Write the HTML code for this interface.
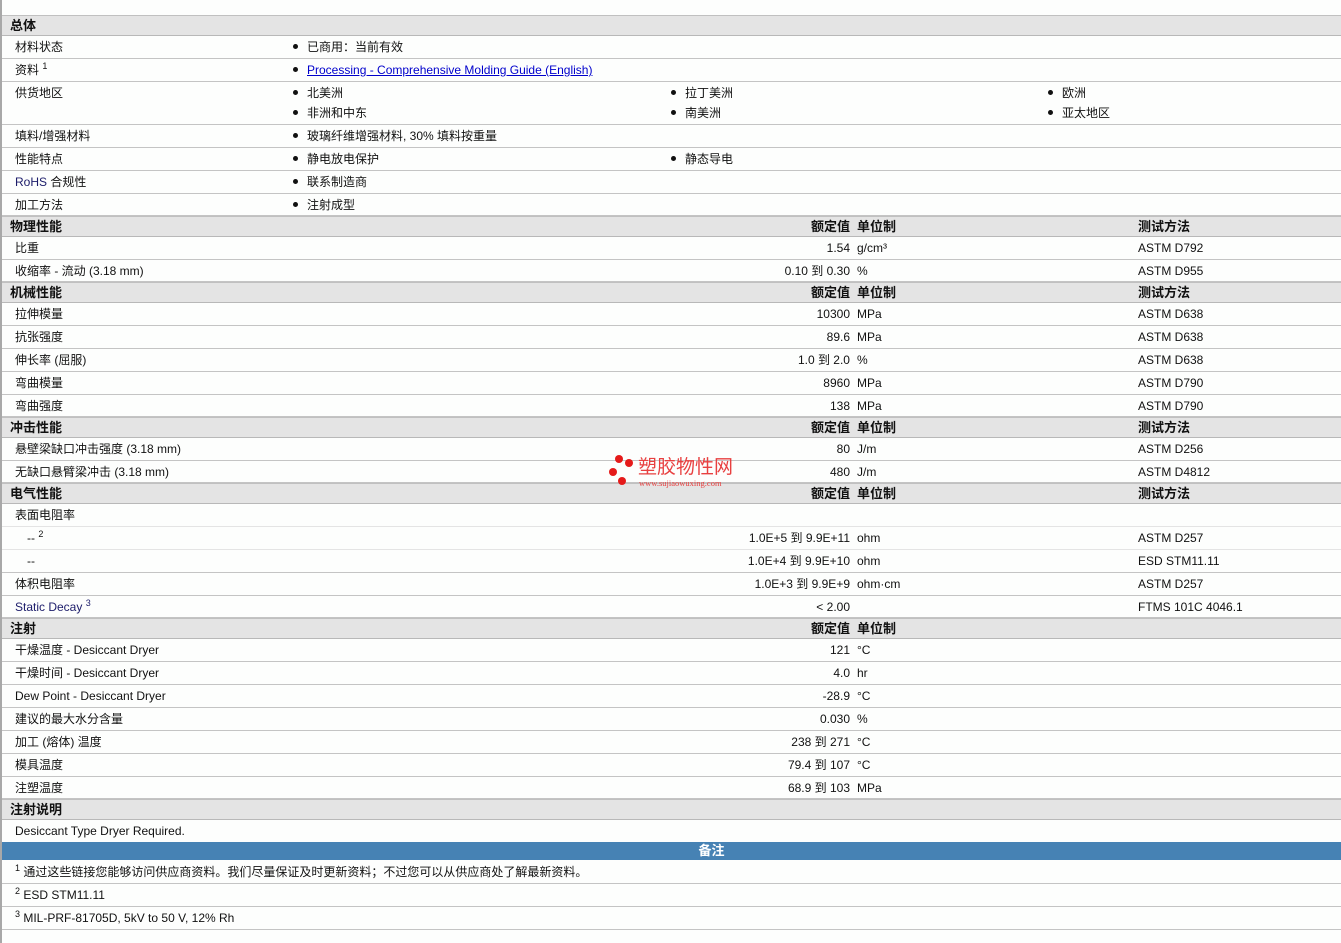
<!DOCTYPE html>
<html><head><meta charset="utf-8"><style>
body{margin:0;width:1341px;height:943px;background:#fdfefd;position:relative;overflow:hidden;font-family:"Liberation Sans","Noto Sans CJK SC",sans-serif;font-size:12px;color:#111;}
.lb{position:absolute;left:0;top:0;width:2px;height:943px;background:#a8a8a8;}
.r{position:absolute;left:2px;right:0;border-bottom:1px solid #c4c4c4;}
.r.t{border-bottom-color:#e4e4e4}
.h{position:absolute;left:2px;right:0;height:19px;background:#e4e4e4;border-top:1px solid #c0c0c0;border-bottom:1px solid #b8b8b8;font-weight:bold;font-size:13px;}
.h span{position:absolute;top:2px;line-height:15px;height:15px;white-space:nowrap}
.r span{position:absolute;top:4px;white-space:nowrap;line-height:14px;height:14px}
.r span span{position:static}
.l{left:13px}
.v{right:491px;text-align:right}
.u{left:855px}
.m{left:1136px}
.b1{left:291px}.b2{left:669px}.b3{left:1046px}
.bl::before{content:"";display:inline-block;width:5px;height:5px;border-radius:50%;background:#111;margin-right:9px;vertical-align:2px}
.en{color:#1c1c6a}
sup{font-size:9px;vertical-align:5px;line-height:0}
a{color:#00c;text-decoration:underline}
.blue{position:absolute;left:2px;right:0;top:842px;height:18px;background:#4682b4;color:#fff;font-weight:bold;font-size:13px;text-align:center;line-height:17px;padding-left:80px;box-sizing:border-box}
</style></head><body>
<div class="lb"></div>
<div class="h" style="top:15px"><span class="l" style="left:8px">总体</span></div>
<div class="r" style="top:36px;height:22px"><span class="l">材料状态</span><span class="b1 bl">已商用：当前有效</span></div>
<div class="r" style="top:59px;height:22px"><span class="l">资料 <sup>1</sup></span><span class="b1 bl"><a>Processing - Comprehensive Molding Guide (English)</a></span></div>
<div class="r" style="top:82px;height:42px"><span class="l">供货地区</span><span class="b1 bl">北美洲</span><span class="b2 bl">拉丁美洲</span><span class="b3 bl">欧洲</span><span class="b1 bl" style="top:24px">非洲和中东</span><span class="b2 bl" style="top:24px">南美洲</span><span class="b3 bl" style="top:24px">亚太地区</span></div>
<div class="r" style="top:125px;height:22px"><span class="l">填料/增强材料</span><span class="b1 bl">玻璃纤维增强材料, 30% 填料按重量</span></div>
<div class="r" style="top:148px;height:22px"><span class="l">性能特点</span><span class="b1 bl">静电放电保护</span><span class="b2 bl">静态导电</span></div>
<div class="r" style="top:171px;height:22px"><span class="l"><span class="en">RoHS</span> 合规性</span><span class="b1 bl">联系制造商</span></div>
<div class="r" style="top:194px;height:21px"><span class="l">加工方法</span><span class="b1 bl">注射成型</span></div>

<div class="h" style="top:216px"><span style="left:8px">物理性能</span><span class="v">额定值</span><span class="u">单位制</span><span class="m">测试方法</span></div>
<div class="r" style="top:237px;height:22px"><span class="l">比重</span><span class="v">1.54</span><span class="u">g/cm³</span><span class="m">ASTM D792</span></div>
<div class="r" style="top:260px;height:21px"><span class="l">收缩率 - 流动 (3.18 mm)</span><span class="v">0.10 到 0.30</span><span class="u">%</span><span class="m">ASTM D955</span></div>

<div class="h" style="top:282px"><span style="left:8px">机械性能</span><span class="v">额定值</span><span class="u">单位制</span><span class="m">测试方法</span></div>
<div class="r" style="top:303px;height:22px"><span class="l">拉伸模量</span><span class="v">10300</span><span class="u">MPa</span><span class="m">ASTM D638</span></div>
<div class="r" style="top:326px;height:22px"><span class="l">抗张强度</span><span class="v">89.6</span><span class="u">MPa</span><span class="m">ASTM D638</span></div>
<div class="r" style="top:349px;height:22px"><span class="l">伸长率 (屈服)</span><span class="v">1.0 到 2.0</span><span class="u">%</span><span class="m">ASTM D638</span></div>
<div class="r" style="top:372px;height:22px"><span class="l">弯曲模量</span><span class="v">8960</span><span class="u">MPa</span><span class="m">ASTM D790</span></div>
<div class="r" style="top:395px;height:21px"><span class="l">弯曲强度</span><span class="v">138</span><span class="u">MPa</span><span class="m">ASTM D790</span></div>

<div class="h" style="top:417px"><span style="left:8px">冲击性能</span><span class="v">额定值</span><span class="u">单位制</span><span class="m">测试方法</span></div>
<div class="r" style="top:438px;height:22px"><span class="l">悬壁梁缺口冲击强度 (3.18 mm)</span><span class="v">80</span><span class="u">J/m</span><span class="m">ASTM D256</span></div>
<div class="r" style="top:461px;height:21px"><span class="l">无缺口悬臂梁冲击 (3.18 mm)</span><span class="v">480</span><span class="u">J/m</span><span class="m">ASTM D4812</span></div>

<div class="h" style="top:483px"><span style="left:8px">电气性能</span><span class="v">额定值</span><span class="u">单位制</span><span class="m">测试方法</span></div>
<div class="r t" style="top:504px;height:22px"><span class="l">表面电阻率</span></div>
<div class="r t" style="top:527px;height:22px"><span class="l" style="left:25px">-- <sup>2</sup></span><span class="v">1.0E+5 到 9.9E+11</span><span class="u">ohm</span><span class="m">ASTM D257</span></div>
<div class="r" style="top:550px;height:22px"><span class="l" style="left:25px">--</span><span class="v">1.0E+4 到 9.9E+10</span><span class="u">ohm</span><span class="m">ESD STM11.11</span></div>
<div class="r" style="top:573px;height:22px"><span class="l">体积电阻率</span><span class="v">1.0E+3 到 9.9E+9</span><span class="u">ohm·cm</span><span class="m">ASTM D257</span></div>
<div class="r" style="top:596px;height:21px"><span class="l en">Static Decay <sup>3</sup></span><span class="v">&lt; 2.00</span><span class="m">FTMS 101C 4046.1</span></div>

<div class="h" style="top:618px"><span style="left:8px">注射</span><span class="v">额定值</span><span class="u">单位制</span></div>
<div class="r" style="top:639px;height:22px"><span class="l">干燥温度 - Desiccant Dryer</span><span class="v">121</span><span class="u">°C</span></div>
<div class="r" style="top:662px;height:22px"><span class="l">干燥时间 - Desiccant Dryer</span><span class="v">4.0</span><span class="u">hr</span></div>
<div class="r" style="top:685px;height:22px"><span class="l">Dew Point - Desiccant Dryer</span><span class="v">-28.9</span><span class="u">°C</span></div>
<div class="r" style="top:708px;height:22px"><span class="l">建议的最大水分含量</span><span class="v">0.030</span><span class="u">%</span></div>
<div class="r" style="top:731px;height:22px"><span class="l">加工 (熔体) 温度</span><span class="v">238 到 271</span><span class="u">°C</span></div>
<div class="r" style="top:754px;height:22px"><span class="l">模具温度</span><span class="v">79.4 到 107</span><span class="u">°C</span></div>
<div class="r" style="top:777px;height:21px"><span class="l">注塑温度</span><span class="v">68.9 到 103</span><span class="u">MPa</span></div>

<div class="h" style="top:799px"><span style="left:8px">注射说明</span></div>
<div class="r" style="top:820px;height:22px;border:none"><span class="l">Desiccant Type Dryer Required.</span></div>
<div class="blue">备注</div>
<div class="r" style="top:861px;height:22px"><span class="l"><sup>1</sup> 通过这些链接您能够访问供应商资料。我们尽量保证及时更新资料；不过您可以从供应商处了解最新资料。</span></div>
<div class="r" style="top:884px;height:22px"><span class="l"><sup>2</sup> ESD STM11.11</span></div>
<div class="r" style="top:907px;height:22px"><span class="l"><sup>3</sup> MIL-PRF-81705D, 5kV to 50 V, 12% Rh</span></div>

<div style="position:absolute;left:608px;top:455px;width:140px;height:34px">
<div style="position:absolute;left:7px;top:0;width:8px;height:8px;border-radius:50%;background:#e51a1a"></div>
<div style="position:absolute;left:17px;top:4px;width:8px;height:8px;border-radius:50%;background:#e51a1a"></div>
<div style="position:absolute;left:1px;top:13px;width:8px;height:8px;border-radius:50%;background:#e51a1a"></div>
<div style="position:absolute;left:10px;top:22px;width:8px;height:8px;border-radius:50%;background:#e51a1a"></div>
<div style="position:absolute;left:30px;top:3px;font-size:19px;color:#e84040;white-space:nowrap;line-height:20px">塑胶物性网</div>
<div style="position:absolute;left:31px;top:23px;font-size:8.5px;color:#e84040;font-family:'Liberation Serif',serif;white-space:nowrap">www.sujiaowuxing.com</div>
</div>
</body></html>
